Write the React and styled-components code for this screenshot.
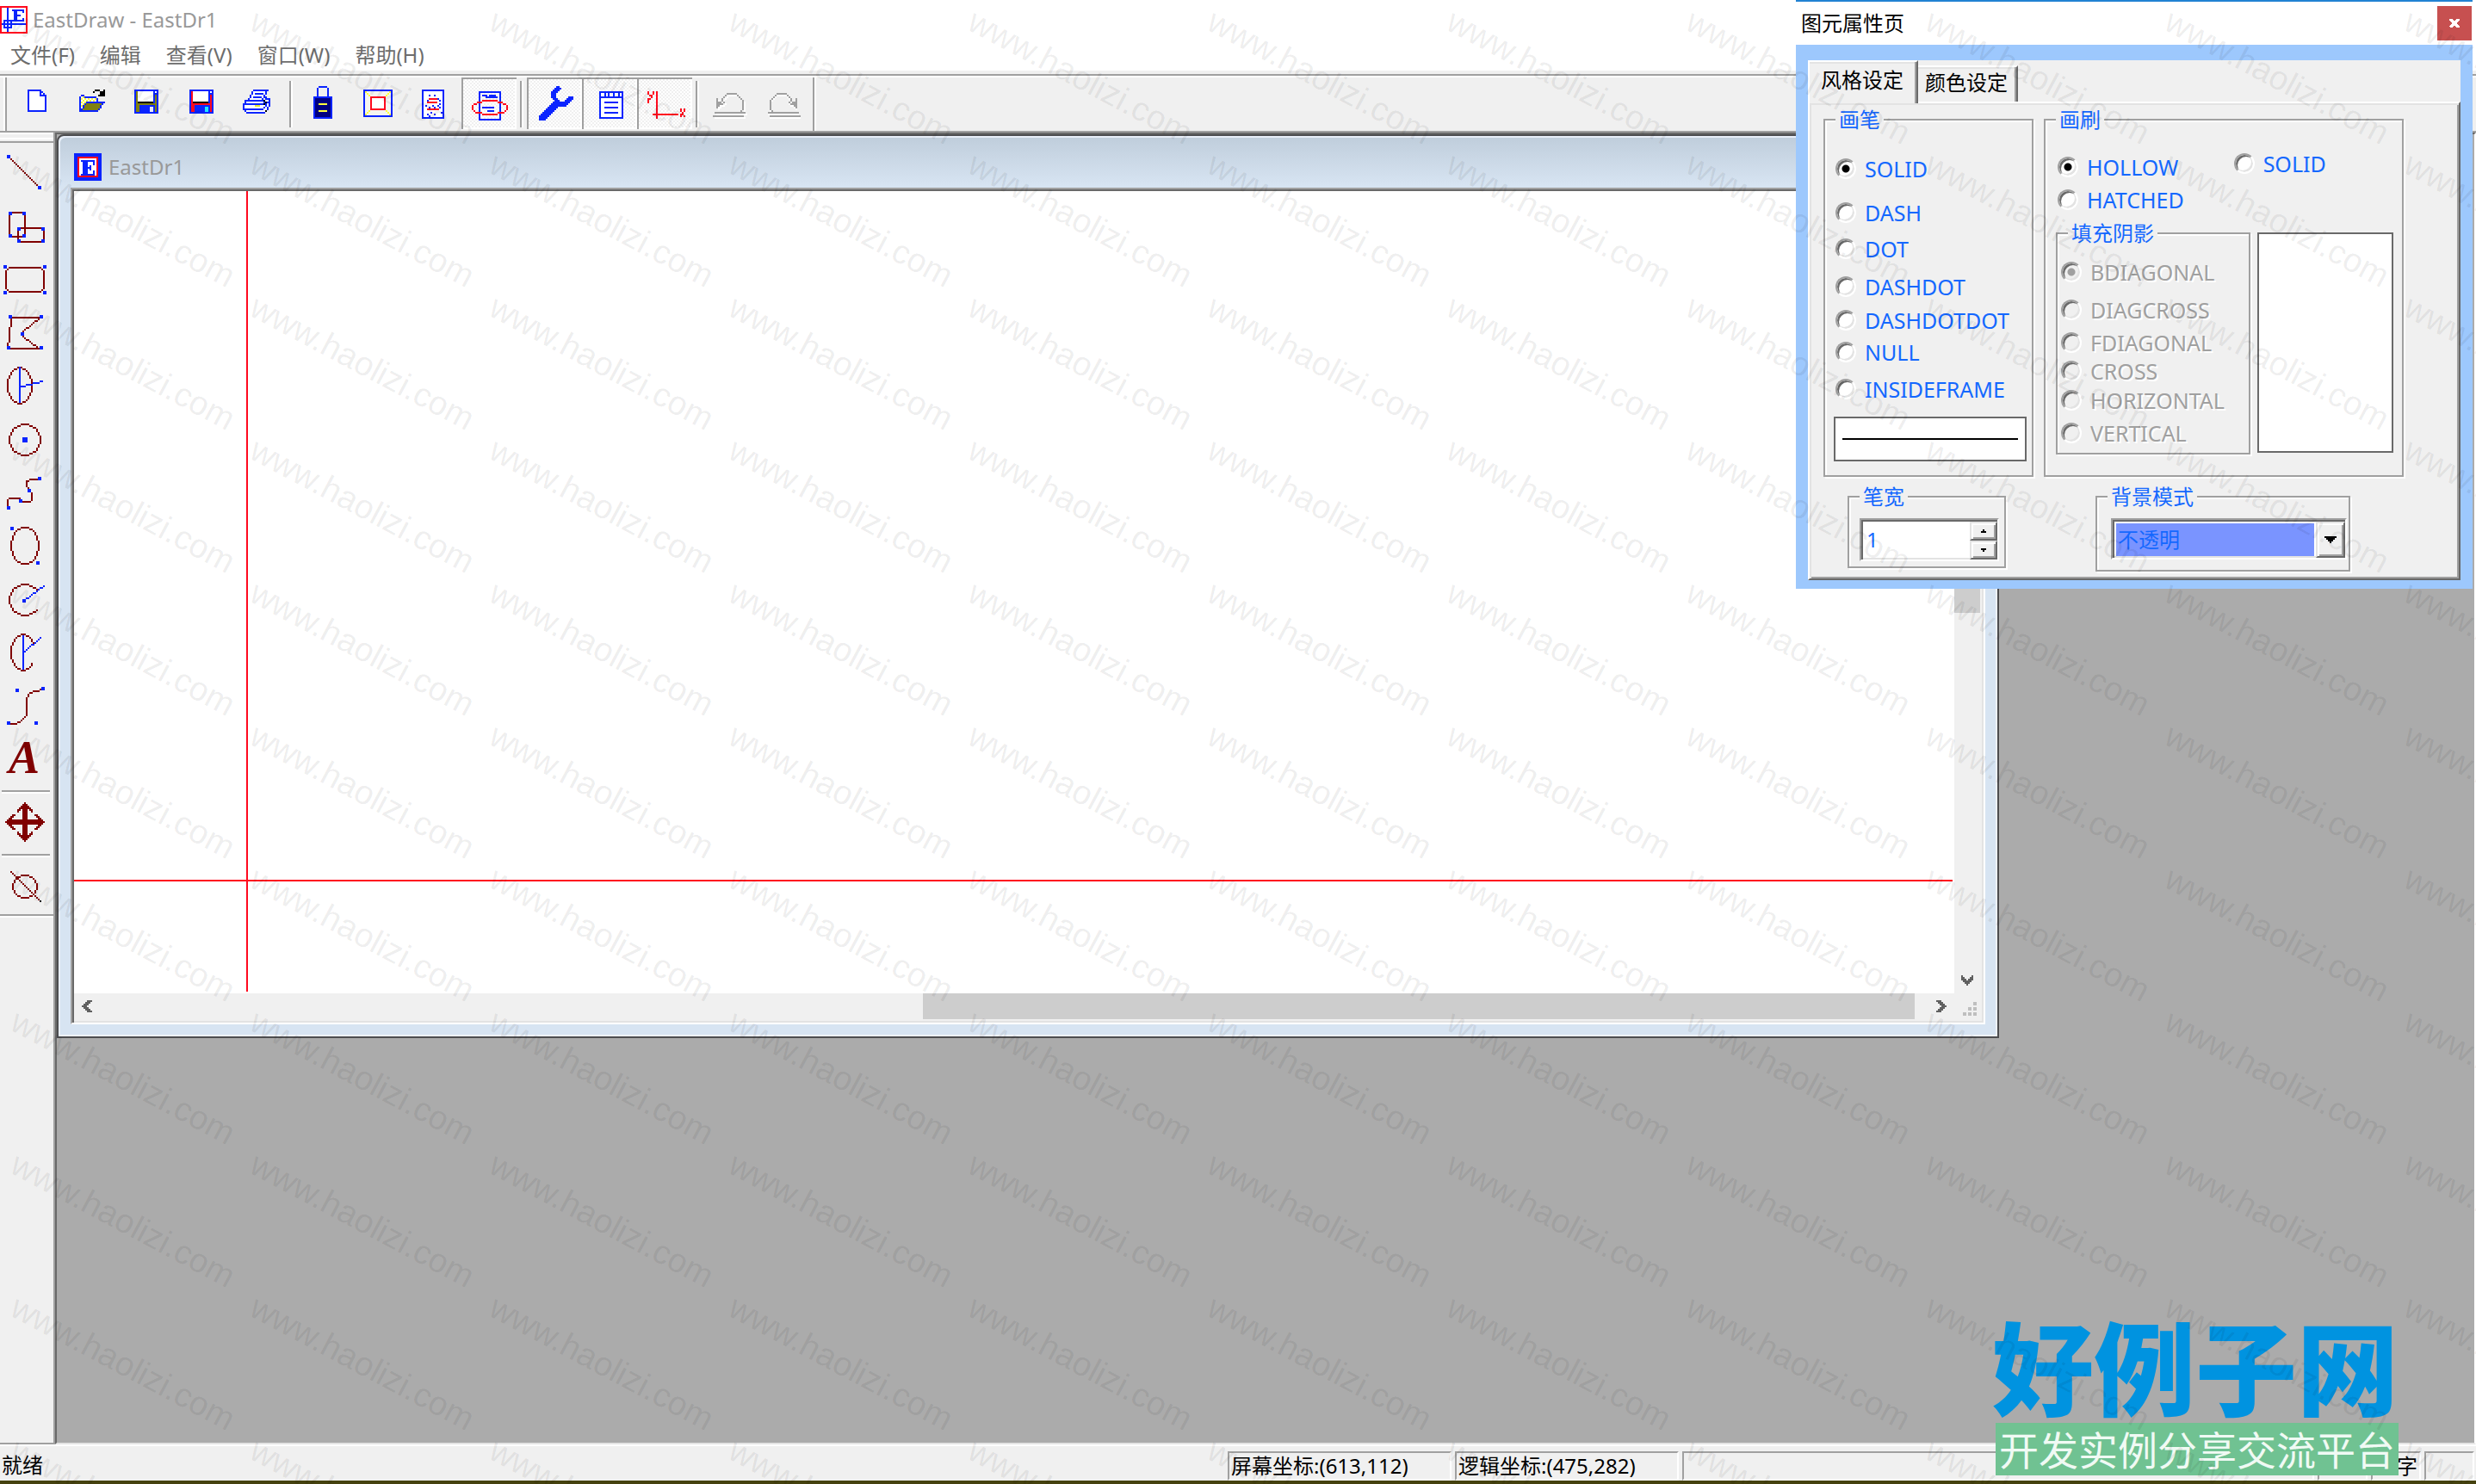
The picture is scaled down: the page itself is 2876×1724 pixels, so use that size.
import React from 'react';
import styled, { createGlobalStyle, css } from 'styled-components';

const face = '#f0f0f0';
const mid = '#a0a0a0';
const dark = '#696969';
const soft = '#e3e3e3';
const frame = '#d7e4f2';
const BLUE = '#0a24ff';
const MAROON = '#800000';
const RED = '#ff0a1e';
const fonts = '"Noto Sans", "Noto Sans CJK SC", sans-serif';

const Global = createGlobalStyle`
  *, *::before, *::after { box-sizing: border-box; }
  body { margin: 0; font: 24px/24px ${fonts}; background: ${face}; color: #000; }
  button, input, select { font: inherit; color: inherit; margin: 0; padding: 0; border: 0; background: none; border-radius: 0; }
  svg { display: block; }
`;

/* ---------- pixel drawing helpers ---------- */

const dots = (pts) => pts.map(([x, y]) => `M${x} ${y}h1v1h-1z`).join('');

function walk(list) {
  const out = [];
  for (let i = 0; i + 3 < list.length; i += 2) {
    const [x0, y0, x1, y1] = list.slice(i, i + 4);
    const n = Math.max(Math.abs(x1 - x0), Math.abs(y1 - y0)) || 1;
    for (let k = 0; k <= n; k += 1) {
      out.push([Math.round(x0 + ((x1 - x0) * k) / n), Math.round(y0 + ((y1 - y0) * k) / n)]);
    }
  }
  return out;
}

function ring(x0, y0, x1, y1, from, to) {
  const cx = (x0 + x1) / 2;
  const cy = (y0 + y1) / 2;
  const rx = (x1 - x0) / 2;
  const ry = (y1 - y0) / 2;
  const inside = (x, y) => ((x - cx) / (rx + 0.4)) ** 2 + ((y - cy) / (ry + 0.4)) ** 2 <= 1;
  const out = [];
  for (let y = y0; y <= y1; y += 1) {
    for (let x = x0; x <= x1; x += 1) {
      const edge = !inside(x - 1, y) || !inside(x + 1, y) || !inside(x, y - 1) || !inside(x, y + 1);
      const a = ((Math.atan2(y - cy, x - cx) * 180) / Math.PI + 360) % 360;
      if (inside(x, y) && edge && a >= from && a <= to) out.push([x, y]);
    }
  }
  return out;
}

const Pen = ({ c = BLUE, p }) => <path fill={c} d={dots(walk(p.split(' ').map(Number)))} />;
const Dots = ({ c = BLUE, p }) => {
  const n = p.split(' ').map(Number);
  const pts = [];
  for (let i = 0; i < n.length; i += 2) pts.push([n[i], n[i + 1]]);
  return <path fill={c} d={dots(pts)} />;
};
const Oval = ({ c = MAROON, b, from = 0, to = 360 }) => (
  <path fill={c} d={dots(ring(...b, from, to))} />
);
const Fill = ({ c = BLUE, b: [x, y, w, h] }) => <rect fill={c} x={x} y={y} width={w} height={h} />;
const Frame = ({ c = BLUE, bg = 'none', b: [x, y, w, h] }) => (
  <rect x={x + 0.5} y={y + 0.5} width={w - 1} height={h - 1} stroke={c} fill={bg} />
);
const Grip = ({ at }) => at.map(([x, y]) => <Fill key={`${x}-${y}`} b={[x, y, 2, 2]} />);

const Glyph = styled.svg.attrs({ shapeRendering: 'crispEdges', 'aria-hidden': true })`
  flex: none;
`;

/* ---------- toolbar icons ---------- */

const Floppy = ({ shell, tab }) => (
  <>
    <Fill b={[8, 7, 14, 14]} />
    <Fill c={shell} b={[9, 8, 12, 12]} />
    <Fill b={[9, 7, 1, 8]} />
    <Fill c={shell} b={[9, 8, 1, 11]} />
    <Fill c="#fff" b={[10, 8, 9, 6]} />
    <Fill b={[19, 8, 1, 7]} />
    <Fill c="#fff" b={[20, 8, 1, 1]} />
    <Fill b={[20, 9, 1, 1]} />
    <Fill c="#000" b={[10, 14, 9, 1]} />
    <Fill b={[11, 16, 9, 4]} />
    <Fill c={tab} b={[17, 17, 2, 3]} />
  </>
);

const undoArt = (c, d) => (
  <g transform={`translate(${d} ${d})`}>
    <Pen c={c} p="10 14 11 12 12 11 14 9 19 9 21 11 22 12 23 14 23 17 22 19" />
    <Pen c={c} p="8 12 8 17" />
    <Pen c={c} p="9 14 9 16" />
    <Pen c={c} p="10 14 10 15" />
    <Pen c={c} p="8 16 11 15 12 14" />
    <Pen c={c} p="7 20 24 20" />
    <Pen c={c} p="6 22 23 22" />
  </g>
);

const tools = {
  新建: (
    <>
      <path fill="#fff" d="M11 8h7v3h3v8H11z" />
      <Pen p="10 7 10 19 20 19 20 10 17 7 10 7" />
      <Pen p="17 7 17 10 20 10" />
    </>
  ),
  打开: (
    <>
      <path fill="#fff" d="M9 11h9v4h-5l-4 5z" />
      <Dots c="#ffff3c" p="9 12 11 12 13 12 15 12 17 12 10 13 12 13 14 13 16 13 9 14 11 14 10 15 9 16 10 11 9 18" />
      <Pen p="8 19 8 11 9 10 10 10 11 11 17 11 18 12 18 13" />
      <path fill="#808010" d="M12 15h10v1h-1v1h-1v1h-1v1H9v-1h1v-1h1v-1h1z" />
      <Pen p="12 14 22 14 18 19 8 19 12 14" />
      <Pen c="#000" p="16 8 17 7 19 7 21 9" />
      <path fill="#000" d="M22 7h1v4h-4v-1h1V9h1V8h1z" />
    </>
  ),
  保存: <Floppy shell="#808010" tab="#e8e8f8" />,
  另存为: <Floppy shell={RED} tab="#20e8ff" />,
  打印: (
    <>
      <path fill="#fff" d="M13 7h8l-2 6h2l1 1v4l-3 3H9l-1-3V14l4-2z" />
      <Pen p="13 7 21 7 18 12" />
      <Pen p="13 7 10 12 8 13 7 15 7 18 9 20 18 20 20 19 22 16 22 12 20 11 19 13" />
      <Pen p="14 9 18 9" />
      <Pen p="13 11 17 11" />
      <Pen p="9 13 18 13 20 15" />
      <Pen p="7 15 18 15 22 13" />
      <Pen p="8 18 18 18 20 16" />
      <Fill c="#e8e830" b={[14, 16, 3, 1]} />
      <Dots c="#000" p="19 13 20 14 19 15 20 19" />
    </>
  ),
  锁定: (
    <>
      <Pen p="12 11 12 6 13 5 17 5 18 6 18 11" />
      <Frame bg="#000080" b={[10, 11, 11, 13]} />
      <Fill c="#ffff3c" b={[13, 15, 5, 1]} />
      <Fill c="#ffff3c" b={[13, 19, 5, 1]} />
    </>
  ),
  边框: (
    <>
      <Frame bg="#f4f4f0" b={[7, 7, 17, 16]} />
      <Pen c="#ffff3c" p="8 8 22 21" />
      <Pen c="#ffff3c" p="22 8 8 21" />
      <Frame c={RED} bg="#fff" b={[11, 11, 9, 8]} />
    </>
  ),
  页面: (
    <>
      <Frame bg="#fff" b={[9, 7, 13, 17]} />
      <Dots p="13 10 16 10 12 13 18 12 19 13 11 16 13 17 15 16 16 17 18 16 19 15 12 21 14 20 16 21 20 20 13 22 19 17" />
      <Pen c={RED} p="13 12 17 12" />
      <Pen c={RED} p="12 14 17 14" />
      <Pen c={RED} p="12 18 18 18" />
    </>
  ),
  旋转: (
    <>
      <Frame b={[10, 8, 13, 17]} />
      <Pen p="12 10 14 10" />
      <Pen p="16 10 19 10" />
      <Pen p="14 11 20 11" />
      <Pen p="12 17 18 17" />
      <Pen p="15 19 18 19" />
      <Pen c={RED} p="12 13 20 13" />
      <Pen c={RED} p="12 21 20 21" />
      <Pen c={RED} p="11 14 9 14 7 15 6 16 6 18 7 19 9 20 11 20" />
      <Pen c={RED} p="21 14 23 14 25 15 26 16 26 18 25 19 23 20 21 20" />
    </>
  ),
  工具: (
    <path
      fill={BLUE}
      d="M7 22h1v-1h1v-1h1v-1h1v-1h1v-1h1v-1h1v-1h1v-1h1v-1h-1v-1h-1V8h1V7h1V6h1V5h2v1h1v1h-1v1h-1v1h-1v3h1v1h1v1h3v-1h1v-1h1v-1h3v2h-1v1h-1v1h-1v1h-1v1h-5v1h-1v1h-1v1h-1v1h-1v1h-1v1h-1v1h-1v1H7z"
    />
  ),
  属性: (
    <>
      <Frame bg="#fff" b={[10, 8, 14, 16]} />
      <Pen p="10 11 23 11" />
      <Dots p="13 9 13 10 15 9 15 10 18 9 18 10 21 9 21 10" />
      <Pen p="13 14 20 14" />
      <Pen p="13 17 20 17" />
      <Pen p="13 20 20 20" />
    </>
  ),
  坐标轴: (
    <>
      <Pen c={RED} p="11 8 11 23" />
      <Pen c={RED} p="9 21 23 21" />
      <Dots c={RED} p="6 8 6 9 7 10 9 8 9 9 8 10 8 11 7 12 6 13 6 14 6 12 25 18 25 19 26 20 27 18 27 19 26 21 25 21 25 22 27 22" />
    </>
  ),
  撤销: (
    <>
      {undoArt('#fff', 1)}
      {undoArt(mid, 0)}
    </>
  ),
  重做: (
    <>
      <g transform="translate(32 0) scale(-1 1)">{undoArt('#fff', 1)}</g>
      <g transform="translate(31 0) scale(-1 1)">{undoArt(mid, 0)}</g>
    </>
  ),
};

const shapes = {
  直线: (
    <>
      <Pen c={MAROON} p="6 7 22 23" />
      <Grip at={[[4, 5], [22, 23]]} />
    </>
  ),
  矩形: (
    <>
      <Frame c={MAROON} b={[5, 7, 10, 15]} />
      <Frame c={MAROON} b={[10, 16, 16, 9]} />
      <Grip at={[[5, 7], [13, 7], [5, 20], [13, 20], [10, 16], [24, 16], [10, 23], [24, 23]]} />
    </>
  ),
  圆角矩形: (
    <>
      <Pen c={MAROON} p="5 8 23 8 25 10 25 20 23 22 5 22 3 20 3 10 5 8" />
      <Grip at={[[2, 7], [25, 7], [2, 22], [25, 22]]} />
    </>
  ),
  多边形: (
    <>
      <Pen c={MAROON} p="6 6 23 6 13 14 13 17 22 24 4 24 5 16 6 7" />
      <Grip at={[[5, 5], [23, 5], [12, 15], [4, 23], [23, 23]]} />
    </>
  ),
  扇形: (
    <>
      <Oval b={[4, 4, 18, 25]} />
      <Pen p="11 4 11 24" />
      <Pen p="12 15 24 12" />
    </>
  ),
  圆: (
    <>
      <Oval b={[5, 6, 23, 24]} />
      <Fill b={[13, 14, 3, 3]} />
    </>
  ),
  折线: (
    <>
      <Pen c={MAROON} p="4 22 4 19 5 18 11 18 11 20 17 20 18 18 18 16 17 14 15 11 15 8 17 7 22 7" />
      <Grip at={[[4, 23], [11, 19], [16, 13], [22, 6]]} />
    </>
  ),
  椭圆: (
    <>
      <Oval b={[6, 4, 22, 25]} />
      <Grip at={[[6, 4], [21, 24]]} />
    </>
  ),
  圆弧: (
    <>
      <Oval b={[5, 6, 23, 24]} from={38} to={320} />
      <Pen p="14 15 25 7" />
      <Grip at={[[13, 15]]} />
    </>
  ),
  椭圆弧: (
    <>
      <Oval b={[6, 4, 20, 25]} from={52} to={326} />
      <Pen p="13 5 13 24" />
      <Pen p="14 14 23 6" />
    </>
  ),
  曲线: (
    <>
      <Pen c={MAROON} p="6 25 8 25 12 23 14 21 15 19 15 10 17 7 20 6 24 5" />
      <Grip at={[[9, 5], [24, 4], [4, 24], [20, 24]]} />
    </>
  ),
  文字: (
    <text x="5" y="23" fill={MAROON} fontFamily='"Liberation Serif", serif' fontWeight="700" fontStyle="italic" fontSize="27">
      A
    </text>
  ),
  移动: (
    <g fill={MAROON}>
      <path d="M13 5h3v20h-3zM5 13h20v3H5z" />
      <path d="M14 3h1v1h1v1h1v1h1v1h1v2h-1V8h-1V7h-1v1h-3V7h-1v1h-1v1h-1V7h1V6h1V5h1V4h1z" />
      <path d="M14 26h1v-1h1v-1h1v-1h1v-1h1v-2h-1v1h-1v1h-1v-1h-3v1h-1v-1h-1v-1h-1v2h1v1h1v1h1v1h1z" />
      <path d="M3 14v1h1v1h1v1h1v1h1v1h2v-1H8v-1H7v-1h1v-3H7v-1h1v-1h1v-1H7v1H6v1H5v1H4v1z" />
      <path d="M26 14v1h-1v1h-1v1h-1v1h-1v1h-2v-1h1v-1h1v-1h-1v-3h1v-1h-1v-1h-1v-1h2v1h1v1h1v1h1v1z" />
    </g>
  ),
  删除: (
    <>
      <Oval b={[7, 8, 21, 21]} />
      <Pen c={MAROON} p="6 6 22 22" />
      <Dots c="#000" p="23 23" />
    </>
  ),
};

/* ---------- application frame ---------- */

const Screen = styled.div`
  position: relative;
  display: flex;
  flex-direction: column;
  height: 100vh;
  overflow: hidden;
`;

const TitleBar = styled.header`
  display: flex;
  align-items: center;
  gap: 6px;
  height: 46px;
  background: #fff;
  color: #999;
`;

const MenuBar = styled.nav`
  display: flex;
  align-items: center;
  gap: 29px;
  height: 36px;
  padding: 0 12px;
  background: #fff;
  color: #6d6d6d;
`;

const ToolStrip = styled.div`
  display: flex;
  height: 68px;
  margin-top: 4px;
  padding-left: 6px;
  border-top: 2px solid ${mid};
  border-bottom: 2px solid ${mid};
  box-shadow: inset 0 2px 0 #fff;
`;

const ToolGroup = styled.div.attrs({ role: 'toolbar' })`
  display: flex;
  margin-top: 2px;
  padding-left: 4px;
  border-left: 2px solid ${mid};
  border-right: 2px solid ${mid};
  box-shadow: 2px 0 0 #fff, -2px 0 0 #fff;
`;

const ToolButton = styled.button`
  width: 64px;
  height: 60px;
  ${(p) =>
    p.$pressed &&
    css`
      background: repeating-conic-gradient(#fff 0 25%, ${face} 0 50%) 0 0 / 4px 4px;
      box-shadow: inset 2px 2px 0 ${mid}, inset -2px -2px 0 #fff;
    `}
`;

const Divider = styled.span`
  flex: none;
  ${(p) =>
    p.$across
      ? css`
          height: 4px;
          margin: 4px 4px 4px 2px;
          border-top: 2px solid ${mid};
          border-bottom: 2px solid #fff;
        `
      : css`
          width: 4px;
          margin: 4px;
          border-left: 2px solid ${mid};
          border-right: 2px solid #fff;
        `}
`;

const Workspace = styled.main`
  flex: 1;
  display: flex;
  min-height: 0;
`;

const SideBar = styled.aside`
  width: 64px;
  padding-top: 10px;
  border-right: 2px solid ${mid};
  border-bottom: 2px solid ${mid};
  background: linear-gradient(#fff 0 2px, ${face} 2px 6px, #fff 6px 8px, ${face} 8px);
`;

const ShapeList = styled.div.attrs({ role: 'toolbar' })`
  display: flex;
  flex-direction: column;
  padding-top: 4px;
  border-top: 2px solid ${mid};
  border-bottom: 2px solid ${mid};
  box-shadow: 0 2px 0 #fff;
`;

const ShapeButton = styled.button`
  height: 62px;
`;

const MdiArea = styled.section`
  flex: 1;
  min-width: 0;
  border: solid;
  border-width: 2px;
  border-color: ${dark} #fff ${soft} ${dark};
  background: #ababab;
`;

const ChildWindow = styled.article`
  display: flex;
  flex-direction: column;
  width: calc(100% - 552px);
  height: calc(100% - 470px);
  padding: 0 14px 14px;
  border: 2px solid #4d4d4f;
  border-top-left-radius: 8px;
  background: linear-gradient(#bfcddb, ${frame} 58px);
  box-shadow: inset 2px 2px 0 #e8eef8, inset -2px -2px 0 #eef2f8;
`;

const ChildTitle = styled.header`
  display: flex;
  align-items: center;
  gap: 8px;
  height: 60px;
  padding: 12px 0 0 4px;
  color: #999;
`;

const Client = styled.div`
  flex: 1;
  min-height: 0;
  display: grid;
  grid-template: minmax(0, 1fr) 32px / minmax(0, 1fr) 32px;
  border: 2px solid;
  border-color: ${mid} #fff #fff ${mid};
  box-shadow: inset 2px 2px 0 ${dark}, inset -2px -2px 0 ${soft};
  padding: 2px;
  background: ${face};
`;

const Canvas = styled.div`
  position: relative;
  background: #fff;
`;

const CrossX = styled.i`
  position: absolute;
  top: 800px;
  left: 0;
  right: 2px;
  height: 2px;
  background: ${RED};
`;

const CrossY = styled.i`
  position: absolute;
  left: 200px;
  top: 0;
  bottom: 2px;
  width: 2px;
  background: ${RED};
`;

const ScrollBar = styled.div`
  display: flex;
  flex-direction: ${(p) => (p.$vertical ? 'column' : 'row')};
  background: ${face};
`;

const ScrollButton = styled.button`
  display: grid;
  place-items: center;
  width: 30px;
  height: 30px;
`;

const Track = styled.div`
  flex: 1;
  display: flex;
  flex-direction: ${(p) => (p.$vertical ? 'column' : 'row')};
  justify-content: ${(p) => (p.$vertical ? 'flex-start' : 'flex-end')};
  padding-right: ${(p) => (p.$vertical ? 0 : 16)}px;
`;

const Thumb = styled.span`
  background: #cdcdcd;
  ${(p) => (p.$vertical ? 'height: 460px; margin-right: 2px;' : 'width: 1152px; margin-bottom: 2px;')}
`;

const Corner = styled.div`
  display: flex;
  align-items: flex-end;
  justify-content: flex-end;
  padding: 6px;
`;

const StatusBar = styled.footer`
  display: flex;
  gap: 4px;
  height: 46px;
  padding: 6px 2px 0 0;
  border-top: 2px solid #fff;
  border-bottom: 4px solid #45420f;
  background: ${face};
`;

const StatusText = styled.span`
  flex: 1;
  padding: 4px 2px;
`;

const Pane = styled.output`
  width: ${(p) => p.$w}px;
  padding: 4px 2px;
  border: 2px solid;
  border-color: ${mid} #fff #fff ${mid};
  line-height: 22px;
  text-align: ${(p) => p.$align || 'left'};
  white-space: nowrap;
`;

/* ---------- property dialog ---------- */

const Dialog = styled.section.attrs({ role: 'dialog' })`
  position: absolute;
  top: 0;
  right: 4px;
  width: 786px;
  border-top: 2px solid #2182d3;
  background: #9dc8fd;
`;

const DialogTitle = styled.header`
  display: flex;
  justify-content: space-between;
  align-items: center;
  height: 50px;
  padding: 0 1px 0 6px;
  background: #fff;
`;

const CloseButton = styled.button`
  display: grid;
  place-items: center;
  width: 40px;
  height: 40px;
  background: #c75050;
`;

const DialogBody = styled.div`
  margin: 18px 14px 10px;
  background: ${face};
`;

const TabList = styled.div.attrs({ role: 'tablist' })`
  display: flex;
  align-items: flex-end;
  height: 48px;
`;

const Tab = styled.button.attrs({ role: 'tab' })`
  position: relative;
  height: ${(p) => (p.$on ? 50 : 42)}px;
  width: ${(p) => (p.$on ? 128 : 116)}px;
  margin-bottom: ${(p) => (p.$on ? -2 : 0)}px;
  padding: 0 2px ${(p) => (p.$on ? 6 : 4)}px 0;
  border-top: 2px solid #fff;
  border-left: ${(p) => (p.$on ? 2 : 0)}px solid #fff;
  border-right: 2px solid ${dark};
  box-shadow: inset -2px 0 0 ${mid}, inset 0 2px 0 ${soft};
  background: ${face};
`;

const TabPanel = styled.form.attrs({ role: 'tabpanel' })`
  display: flex;
  flex-direction: column;
  gap: 11px;
  height: 556px;
  padding: 7px 16px 0;
  border: 2px solid;
  border-color: #fff ${dark} ${dark} #fff;
  box-shadow: inset 2px 2px 0 ${soft}, inset -2px -2px 0 ${mid};
  color: #1468ff;
`;

const Row = styled.div`
  display: flex;
  align-items: flex-start;
  gap: ${(p) => p.$gap}px;
  padding-left: ${(p) => p.$indent || 0}px;
`;

const Group = styled.fieldset`
  min-width: 0;
  width: ${(p) => p.$w}px;
  height: ${(p) => p.$h}px;
  margin: 0;
  padding: 0;
  border: 2px solid ${mid};
  box-shadow: 2px 2px 0 #fff, inset 2px 2px 0 #fff;
`;

const Legend = styled.legend`
  margin-left: 12px;
  padding: 0 4px;
  background: ${face};
`;

const GroupBody = styled.div`
  padding: ${(p) => p.$pad};
`;

const Options = styled.div`
  display: grid;
  grid-template-rows: ${(p) => p.$rows};
  padding: ${(p) => p.$pad || 0};
`;

const Option = styled.label`
  display: flex;
  align-items: center;
  gap: 10px;
  height: 24px;
  font-size: 25px;
  white-space: nowrap;
  color: ${(p) => (p.$off ? mid : 'inherit')};
  text-shadow: ${(p) => (p.$off ? '2px 2px 0 #fff' : 'none')};
`;

const Radio = styled.input.attrs({ type: 'radio' })`
  appearance: none;
  flex: none;
  width: 24px;
  height: 24px;
  margin: 0;
  border: 2px solid;
  border-color: ${mid} #fff #fff ${mid};
  border-radius: 50%;
  background: #fff;
  box-shadow: inset 2px 2px 0 ${dark}, inset -2px -2px 0 ${soft};
  &:checked {
    background: radial-gradient(circle, #000 0 4px, #fff 5px);
  }
  &:disabled {
    background: ${face};
  }
  &:disabled:checked {
    background: radial-gradient(circle, ${mid} 0 4px, ${face} 5px);
  }
`;

const Preview = styled.div`
  display: flex;
  align-items: center;
  height: ${(p) => p.$h}px;
  width: ${(p) => p.$w}px;
  margin-top: ${(p) => p.$top}px;
  padding: 0 8px;
  border: 2px solid ${dark};
  background: #fff;
`;

const SampleLine = styled.hr`
  flex: 1;
  margin: 0;
  border: 0;
  height: 2px;
  background: #000;
`;

const Sunken = styled.div`
  display: flex;
  height: ${(p) => p.$h}px;
  padding: 2px 0 0 2px;
  border: 2px solid;
  border-color: ${mid} #fff #fff ${mid};
  box-shadow: inset 2px 2px 0 ${dark}, inset -2px -2px 0 ${soft};
  background: #fff;
`;

const WidthInput = styled.input`
  flex: 1;
  min-width: 0;
  padding: 0 0 4px 4px;
`;

const Spinner = styled.div`
  display: grid;
  grid-template-rows: 1fr 1fr;
  width: 32px;
`;

const raised = css`
  display: grid;
  place-items: center;
  border: 2px solid;
  border-color: ${soft} ${dark} ${dark} ${soft};
  box-shadow: inset 2px 2px 0 #fff, inset -2px -2px 0 ${mid};
  background: ${face};
`;

const SpinButton = styled.button`
  ${raised}
`;

const ModeSelect = styled.select`
  appearance: none;
  flex: 1;
  margin: 2px;
  padding-left: 2px;
  background: #7a94ff;
`;

const DropArrow = styled.span`
  ${raised}
  width: 34px;
`;

/* ---------- site branding ---------- */

const Brand = styled.div`
  position: absolute;
  right: 90px;
  bottom: 10px;
  width: 468px;
`;

const BrandName = styled.div`
  margin: 0 -4px 4px;
  color: #0093e0;
  font: 900 118px/128px "Noto Sans CJK SC", sans-serif;
  white-space: nowrap;
`;

const BrandLine = styled.div`
  height: 61px;
  background: #70c292;
  color: #f0faf4;
  font: 46px/58px "Noto Sans CJK SC", sans-serif;
  text-align: center;
  white-space: nowrap;
`;

const Marks = styled.div`
  position: absolute;
  inset: 0;
  display: grid;
  grid-template-columns: repeat(11, 278px);
  grid-auto-rows: 166px;
  overflow: hidden;
  pointer-events: none;
`;

const Mark = styled.span`
  padding-left: 8px;
  color: rgba(0, 0, 0, 0.08);
  font: 39px/40px "Liberation Sans", sans-serif;
  white-space: nowrap;
  transform: rotate(28deg);
  transform-origin: 8px 36px;
`;

const Arrow = ({ d, w = 14, h = 14, c = '#606060' }) => (
  <Glyph width={w} height={h} viewBox={`0 0 ${w / 2} ${h / 2}`}>
    <path fill={c} d={d} />
  </Glyph>
);

const Tool = ({ name, pressed }) => (
  <ToolButton type="button" aria-label={name} aria-pressed={pressed} $pressed={pressed}>
    <Glyph width="64" height="60" viewBox="0 0 32 30">{tools[name]}</Glyph>
  </ToolButton>
);

const Shape = ({ name }) => (
  <ShapeButton type="button" aria-label={name}>
    <Glyph width="60" height="62" viewBox="0 0 30 31">{shapes[name]}</Glyph>
  </ShapeButton>
);

const Choice = ({ group, label, on, off }) => (
  <Option $off={off}>
    <Radio name={group} defaultChecked={on} disabled={off} />
    {label}
  </Option>
);

const AppIcon = () => (
  <Glyph width="32" height="32" viewBox="0 0 16 16">
    <Frame c={RED} bg="#fff" b={[0, 0, 16, 16]} />
    <Pen p="4 1 4 14" />
    <Pen p="1 10 14 10" />
    <Frame b={[2, 8, 5, 5]} />
    <Fill b={[7, 2, 7, 1]} />
    <Fill b={[8, 3, 2, 5]} />
    <Fill b={[10, 5, 2, 1]} />
    <Fill b={[13, 3, 1, 1]} />
    <Fill b={[13, 7, 1, 1]} />
    <Fill b={[7, 8, 7, 1]} />
  </Glyph>
);

const DocIcon = () => (
  <Glyph width="32" height="32" viewBox="0 0 16 16">
    <Fill b={[0, 0, 16, 16]} />
    <Fill c={RED} b={[2, 2, 12, 12]} />
    <Fill c="#fff" b={[3, 3, 10, 10]} />
    <Fill b={[4, 4, 8, 1]} />
    <Fill b={[4, 12, 8, 1]} />
    <Fill b={[5, 4, 3, 9]} />
    <Fill b={[8, 8, 1, 1]} />
    <Fill b={[9, 7, 1, 3]} />
    <Fill b={[11, 5, 1, 2]} />
    <Fill b={[11, 10, 1, 2]} />
  </Glyph>
);

const menus = ['文件(F)', '编辑', '查看(V)', '窗口(W)', '帮助(H)'];
const pens = ['SOLID', 'DASH', 'DOT', 'DASHDOT', 'DASHDOTDOT', 'NULL', 'INSIDEFRAME'];
const hatches = ['BDIAGONAL', 'DIAGCROSS', 'FDIAGONAL', 'CROSS', 'HORIZONTAL', 'VERTICAL'];
const shapeNames = Object.keys(shapes);

function PropertyDialog() {
  return (
    <Dialog aria-label="图元属性页">
      <DialogTitle>
        图元属性页
        <CloseButton type="button" aria-label="关闭">
          <Glyph width="12" height="10" viewBox="0 0 12 10">
            <path d="M1 0l10 10M11 0L1 10" stroke="#fff" strokeWidth="3" />
          </Glyph>
        </CloseButton>
      </DialogTitle>
      <DialogBody>
        <TabList>
          <Tab type="button" $on aria-selected="true">风格设定</Tab>
          <Tab type="button" aria-selected="false">颜色设定</Tab>
        </TabList>
        <TabPanel>
          <Row $gap={12}>
            <Group $w={244} $h={427}>
              <Legend>画笔</Legend>
              <GroupBody $pad="0 6px 0 10px">
                <Options $rows="51px 42px 44px 39px 37px 43px 24px" $pad="33px 0 0 2px">
                  {pens.map((p, i) => <Choice key={p} group="pen" label={p} on={i === 0} />)}
                </Options>
                <Preview $w={224} $h={52} $top={20}>
                  <SampleLine />
                </Preview>
              </GroupBody>
            </Group>
            <Group $w={418} $h={427}>
              <Legend>画刷</Legend>
              <GroupBody $pad="27px 10px 0 12px">
                <Row $gap={58}>
                  <Options $rows="38px 39px" $pad="4px 0 0 2px">
                    <Choice group="brush" label="HOLLOW" on />
                    <Choice group="brush" label="HATCHED" />
                  </Options>
                  <Choice group="brush" label="SOLID" />
                </Row>
                <Row $gap={8}>
                  <Group $w={226} $h={269}>
                    <Legend>填充阴影</Legend>
                    <GroupBody $pad="21px 0 0 4px">
                      <Options $rows="44px 38px 33px 34px 38px 24px">
                        {hatches.map((h, i) => <Choice key={h} group="hatch" label={h} on={i === 0} off />)}
                      </Options>
                    </GroupBody>
                  </Group>
                  <Preview $w={158} $h={256} $top={11} />
                </Row>
              </GroupBody>
            </Group>
          </Row>
          <Row $gap={104} $indent={28}>
            <Group $w={184} $h={95}>
              <Legend>笔宽</Legend>
              <GroupBody $pad="13px 6px 0 12px">
                <Sunken $h={50}>
                  <WidthInput aria-label="笔宽" defaultValue="1" />
                  <Spinner>
                    <SpinButton type="button" aria-label="增加"><Arrow c="#000" w={6} h={4} d="M1 0h1v1h1v1H0V1h1z" /></SpinButton>
                    <SpinButton type="button" aria-label="减少"><Arrow c="#000" w={6} h={4} d="M0 0h3v1H2v1H1V1H0z" /></SpinButton>
                  </Spinner>
                </Sunken>
              </GroupBody>
            </Group>
            <Group $w={296} $h={99}>
              <Legend>背景模式</Legend>
              <GroupBody $pad="13px 2px 0 16px">
                <Sunken $h={48}>
                  <ModeSelect aria-label="背景模式" defaultValue="不透明">
                    <option>不透明</option>
                    <option>透明</option>
                  </ModeSelect>
                  <DropArrow><Arrow c="#000" h={8} d="M0 0h7v1H6v1H5v1H4v1H3V3H2V2H1V1H0z" /></DropArrow>
                </Sunken>
              </GroupBody>
            </Group>
          </Row>
        </TabPanel>
      </DialogBody>
    </Dialog>
  );
}

export default function App() {
  return (
    <Screen>
      <Global />
      <TitleBar><AppIcon />EastDraw - EastDr1</TitleBar>
      <MenuBar>{menus.map((m) => <button type="button" key={m}>{m}</button>)}</MenuBar>
      <ToolStrip>
        <ToolGroup>
          {['新建', '打开', '保存', '另存为', '打印'].map((n) => <Tool key={n} name={n} />)}
          <Divider />
          {['锁定', '边框', '页面'].map((n) => <Tool key={n} name={n} />)}
          <Tool name="旋转" pressed />
          <Divider />
          {['工具', '属性', '坐标轴'].map((n) => <Tool key={n} name={n} pressed />)}
          <Divider />
          {['撤销', '重做'].map((n) => <Tool key={n} name={n} />)}
        </ToolGroup>
      </ToolStrip>
      <Workspace>
        <SideBar>
          <ShapeList>
            {shapeNames.slice(0, 12).map((n) => <Shape key={n} name={n} />)}
            <Divider $across />
            <Shape name="移动" />
            <Divider $across />
            <Shape name="删除" />
          </ShapeList>
        </SideBar>
        <MdiArea>
          <ChildWindow>
            <ChildTitle><DocIcon />EastDr1</ChildTitle>
            <Client>
              <Canvas><CrossX /><CrossY /></Canvas>
              <ScrollBar $vertical>
                <ScrollButton type="button" aria-label="向上"><Arrow h={12} d="M0 4h1V3h1V2h1V1h1v1h1v1h1v1h1v2H6V5H5V4H2v1H1v1H0z" /></ScrollButton>
                <Track $vertical><Thumb $vertical /></Track>
                <ScrollButton type="button" aria-label="向下"><Arrow h={12} d="M0 0h1v1h1v1h1v1h1V2h1V1h1V0h1v3H6v1H5v1H4v1H3V5H2V4H1V3H0z" /></ScrollButton>
              </ScrollBar>
              <ScrollBar>
                <ScrollButton type="button" aria-label="向左"><Arrow w={12} d="M6 0v1H5v1H4v1H3v1h1v1h1v1h1v1H3V6H2V5H1V4H0V3h1V2h1V1h1V0z" /></ScrollButton>
                <Track><Thumb /></Track>
                <ScrollButton type="button" aria-label="向右"><Arrow w={12} d="M0 0h3v1h1v1h1v1h1v1H5v1H4v1H3v1H0V6h1V5h1V4h1V3H2V2H1V1H0z" /></ScrollButton>
              </ScrollBar>
              <Corner>
                <Glyph width="16" height="16" viewBox="0 0 8 8">
                  {[[6, 0], [3, 3], [6, 3], [0, 6], [3, 6], [6, 6]].map(([x, y]) => (
                    <Fill key={`${x}${y}`} c="#bfbfbf" b={[x, y, 2, 2]} />
                  ))}
                </Glyph>
              </Corner>
            </Client>
          </ChildWindow>
        </MdiArea>
      </Workspace>
      <StatusBar>
        <StatusText>就绪</StatusText>
        <Pane $w={260}>屏幕坐标:(613,112)</Pane>
        <Pane $w={260}>逻辑坐标:(475,282)</Pane>
        <Pane $w={734} />
        <Pane $w={58} />
        <Pane $w={58} $align="right">字</Pane>
        <Pane $w={58} />
      </StatusBar>
      <PropertyDialog />
      <Brand>
        <BrandName>好例子网</BrandName>
        <BrandLine>开发实例分享交流平台</BrandLine>
      </Brand>
      <Marks aria-hidden="true">
        {Array.from({ length: 121 }, (_, i) => <Mark key={i}>www.haolizi.com</Mark>)}
      </Marks>
    </Screen>
  );
}
